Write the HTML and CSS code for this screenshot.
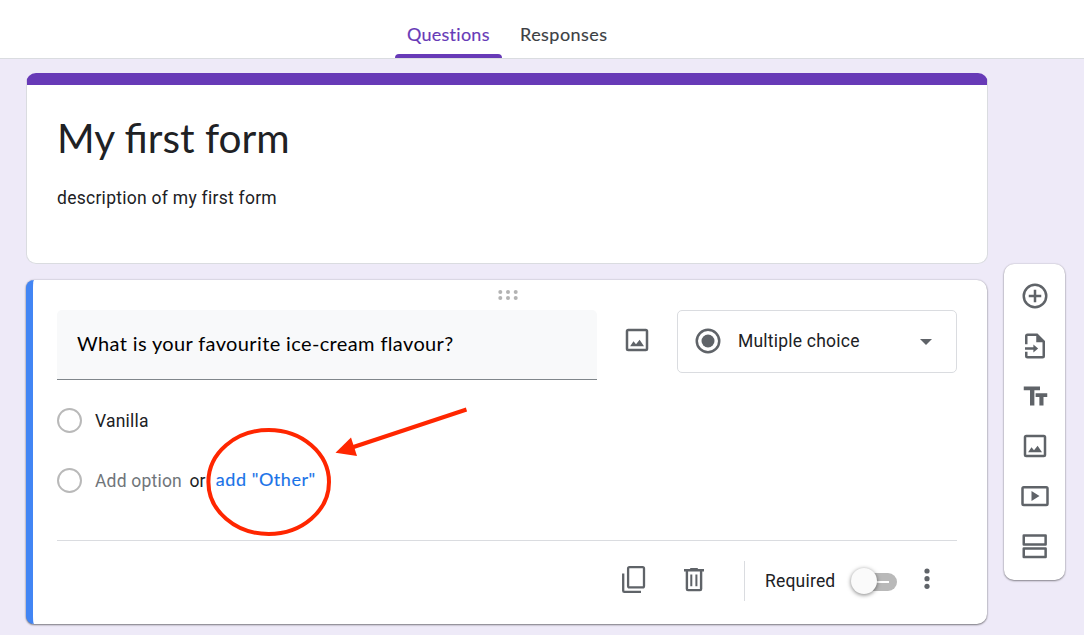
FILE: index.html
```html
<!DOCTYPE html>
<html lang="en">
<head>
<meta charset="utf-8">
<title>My first form</title>
<link rel="stylesheet" href="styles.css">
</head>
<body>
<header class="header">
  <nav class="tabs">
    <a class="tab tab-active"><span class="tab-questions">Questions</span></a>
    <a class="tab"><span class="tab-responses">Responses</span></a>
  </nav>
</header>
<main class="main">
  <div class="column">
    <section class="card title-card">
      <h1 class="form-title">My first form</h1>
      <p class="form-description">description of my first form</p>
    </section>
    <section class="card question-card">
      <svg class="drag" width="20" height="10" viewBox="0 0 20 10" fill="#b3b3b3"><circle cx="2.3" cy="2" r="2"/><circle cx="10" cy="2" r="2"/><circle cx="17.7" cy="2" r="2"/><circle cx="2.3" cy="8" r="2"/><circle cx="10" cy="8" r="2"/><circle cx="17.7" cy="8" r="2"/></svg>
      <div class="question-row">
        <div class="question-input"><span class="question-text">What is your favourite ice-cream flavour?</span></div>
        <button class="image-button"><svg class="icon" viewBox="0 0 24 24"><path fill-rule="evenodd" d="M5 3h14a2 2 0 0 1 2 2v14a2 2 0 0 1-2 2H5a2 2 0 0 1-2-2V5a2 2 0 0 1 2-2zm0 2v14h14V5zM6.5 17l2.7-4 2 2.4 2.9-3.6 3.5 5.2z"/></svg></button>
        <div class="select">
          <svg class="icon select-icon" viewBox="0 0 24 24"><path fill-rule="evenodd" d="M12 2a10 10 0 1 0 0 20 10 10 0 0 0 0-20zm0 18a8 8 0 1 1 0-16 8 8 0 0 1 0 16z"/><circle cx="12" cy="12" r="5.2"/></svg>
          <span class="select-label">Multiple choice</span>
          <svg class="caret" width="12" height="6" viewBox="0 0 12 6"><path d="M0 0h12L6 6z"/></svg>
        </div>
      </div>
      <div class="options">
        <div class="option"><span class="radio"></span><span class="option-text">Vanilla</span></div>
        <div class="option"><span class="radio"></span><span class="option-text add-option">Add option</span><span class="option-text or">or</span><a class="add-other">add "Other"</a></div>
      </div>
      <footer class="question-footer">
        <svg class="copy" width="26" height="30" viewBox="0 0 26 30" fill="none" stroke="#5f6368" stroke-width="2.3"><rect x="7.1" y="2.1" width="15.9" height="20.3" rx="1.4"/><path d="M2.2 8.5v17.2a1.1 1.1 0 0 0 1.1 1.1H20"/></svg>
        <svg class="trash" width="20" height="24" viewBox="0 0 20 24" fill="none" stroke="#5f6368"><path stroke-width="2.4" d="M0 2.3h20M2.9 3v18a1.1 1.1 0 0 0 1.1 1.1h12a1.1 1.1 0 0 0 1.1-1.1V3"/><path stroke-width="2" d="M6.2 1h7.6M7.3 6.500v11.700M12.400 6.500v11.700"/></svg>
        <span class="separator"></span>
        <span class="required">Required</span>
        <span class="toggle"><span class="thumb"></span></span>
        <svg class="more" width="6" height="22" viewBox="0 0 6 22" fill="#5f6368"><circle cx="3" cy="3" r="2.6"/><circle cx="3" cy="10.7" r="2.6"/><circle cx="3" cy="18.3" r="2.6"/></svg>
      </footer>
    </section>
  </div>
  <aside class="toolbar">
    <button class="tool"><svg class="icon" viewBox="0 0 24 24"><path d="M13 7h-2v4H7v2h4v4h2v-4h4v-2h-4zM12 2a10 10 0 1 0 0 20 10 10 0 0 0 0-20zm0 18a8 8 0 1 1 0-16 8 8 0 0 1 0 16z"/></svg></button>
    <button class="tool"><svg class="icon" viewBox="0 0 24 24"><path d="M14 2H6a2 2 0 0 0-2 2v6.5h2V4h7v5h5v11H6v-3.500H4V20a2 2 0 0 0 2 2h12a2 2 0 0 0 2-2V8zM4 13h6.700v-2.200L14.500 14l-3.800 3.200V15H4z"/></svg></button>
    <button class="tool"><svg class="icon" viewBox="0 0 24 24"><path d="M3 4.300h13v3H11.500V19.500H8V7.300H3zM12.500 9.800h9.300v3h-3v6.700h-3.300v-6.700h-3z"/></svg></button>
    <button class="tool"><svg class="icon" viewBox="0 0 24 24"><path fill-rule="evenodd" d="M5 3h14a2 2 0 0 1 2 2v14a2 2 0 0 1-2 2H5a2 2 0 0 1-2-2V5a2 2 0 0 1 2-2zm0 2v14h14V5zM6.500 17l2.700-4 2 2.400 2.900-3.600 3.500 5.200z"/></svg></button>
    <button class="tool"><svg class="icon" viewBox="0 0 24 24"><path fill-rule="evenodd" d="M3 4h18a2 2 0 0 1 2 2v12.200a2 2 0 0 1-2 2H3a2 2 0 0 1-2-2V6a2 2 0 0 1 2-2zm0 2v12.200h18V6zM9.200 8v8l6.400-4z"/></svg></button>
    <button class="tool"><svg class="icon" viewBox="0 0 24 24"><path fill-rule="evenodd" d="M3 2.500h17.500a1 1 0 0 1 1 1v7.300a1 1 0 0 1-1 1H3a1 1 0 0 1-1-1V3.500a1 1 0 0 1 1-1zm1 2v5.300h15.500V4.500zM3 13h17.500a1 1 0 0 1 1 1v6.800a1 1 0 0 1-1 1H3a1 1 0 0 1-1-1V14a1 1 0 0 1 1-1zm1 2v4.800h15.500V15z"/></svg></button>
  </aside>
</main>
<svg class="annotation" width="1084" height="635" viewBox="0 0 1084 635">
  <ellipse cx="268.700" cy="482" rx="60.300" ry="52" fill="none" stroke="#ff2600" stroke-width="4"/>
  <path d="M466.500 409.500L352 447.500" stroke="#ff2600" stroke-width="4"/>
  <path d="M335.500 452.700L351 437.500L357 456z" fill="#ff2600"/>
</svg>
</body>
</html>
```
FILE: styles.css
```css
* { box-sizing: border-box; }
body {
  margin: 0;
  height: 635px;
  overflow: hidden;
  background: #eeeaf8;
  color: #202124;
  font: 17.5px/25px Roboto, sans-serif;
}
button { border: 0; padding: 0; background: none; }
svg { display: block; flex: none; }
span, a { white-space: nowrap; }
.icon { width: 30px; height: 30px; fill: #5f6368; }

.header {
  height: 59px;
  background: #fff;
  border-bottom: 1px solid #dadce0;
  padding-left: 395px;
}
.tabs { display: flex; height: 58px; gap: 6px; }
.tab {
  display: flex;
  flex-direction: column;
  justify-content: space-between;
  width: 107px;
  padding-top: 22px;
  font-family: Lato, sans-serif;
  font-size: 18px;
  letter-spacing: 0.25px;
  color: #3c4043;
  -webkit-text-stroke: 0.15px currentColor;
}
.tab span { padding-left: 12px; }
.tab-responses { letter-spacing: 0.45px; }
.tab-active { color: #673ab7; }
.tab-active::after {
  content: "";
  height: 4px;
  background: #673ab7;
  border-radius: 4px 4px 0 0;
}

.main { display: flex; align-items: flex-start; padding: 14px 0 0 26px; gap: 16px; }
.column { width: 962px; display: flex; flex-direction: column; gap: 15px; }
.card { background: #fff; border: 1px solid #dadce0; border-radius: 10px; }
.title-card {
  height: 191px;
  border-top: 12px solid #673ab7;
  padding: 28px 30px 0;
}
.form-title {
  margin: 0;
  font: 400 40.6px/50px Lato, sans-serif;
}
.form-description { margin: 23px 0 0; letter-spacing: 0.27px; }

.question-card {
  height: 344px;
  margin-top: 1px;
  margin-right: 1px;
  border: 0;
  border-left: 7px solid #4285f4;
  border-radius: 8px 10px 10px 8px;
  padding: 10px 30px 0 24px;
  box-shadow: 0 1px 2px rgba(0,0,0,.45), 0 0 2px rgba(0,0,0,.22);
}
.drag { margin: 0 auto 10px; position: relative; left: 1px; }
.question-row { display: flex; align-items: flex-start; }
.question-input {
  width: 540px;
  height: 70px;
  padding: 21px 20px 0;
  background: #f8f9fa;
  border-bottom: 1px solid #80868b;
  border-radius: 5px 5px 0 0;
  font: 20px/25px Lato, sans-serif;
  letter-spacing: 0.37px;
  color: #000;
}
.image-button { width: 80px; height: 60px; display: grid; place-items: center; }
.select {
  width: 280px;
  height: 63px;
  display: flex;
  align-items: center;
  padding: 0 24px 0 15px;
  border: 1px solid #dadce0;
  border-radius: 5px;
}
.select-icon { margin-bottom: 2px; }
.select-label { margin: 0 auto 0 15px; letter-spacing: 0.22px; }
.caret { fill: #5f6368; }

.options { margin-top: 10px; }
.option { height: 60px; display: flex; align-items: center; }
.radio { width: 25px; height: 25px; margin-right: 13px; border: 2px solid #b9b9b9; border-radius: 50%; }
.option-text { padding-top: 2px; letter-spacing: 0.2px; }
.add-option { color: #70757a; }
.or { margin: 0 10px 0 7.5px; }
.add-other {
  padding-bottom: 1px;
  color: #1a73e8;
  font-family: Lato, sans-serif;
  font-size: 18px;
  letter-spacing: 0.55px;
  -webkit-text-stroke: 0.15px currentColor;
}

.question-footer {
  display: flex;
  margin-top: 30px;
  padding: 20px 0 0 563px;
  border-top: 1px solid #dadce0;
}
.copy { margin: 3.5px 0 0 0.5px; }
.trash { margin: 6.5px 0 0 37.5px; }
.separator { width: 1px; height: 40px; margin-left: 40px; background: #dadce0; }
.required { margin: 8px 0 0 20px; width: 91px; letter-spacing: 0.2px; }
.toggle {
  width: 41px;
  height: 18px;
  margin: 12px 0 0;
  border-radius: 9px;
  background: linear-gradient(#fff, #fff) 20px 8px / 13px 2px no-repeat #b9b9b9;
}
.thumb {
  display: block;
  width: 26px;
  height: 26px;
  margin: -5px 0 0 -5px;
  border-radius: 50%;
  background: #fafafa;
  box-shadow: 0 1px 4px rgba(0,0,0,.5);
}
.more { margin: 7px 0 0 27px; }

.toolbar {
  width: 61px;
  height: 316px;
  margin-top: 191px;
  padding: 7.5px 0;
  background: #fff;
  border-radius: 10px;
  box-shadow: 0 1px 2px rgba(0,0,0,.4), 0 0 2px rgba(0,0,0,.2);
}
.tool { display: grid; place-items: center; width: 61px; height: 49.9px; }

.annotation { position: absolute; left: 0; top: 0; pointer-events: none; }
```
